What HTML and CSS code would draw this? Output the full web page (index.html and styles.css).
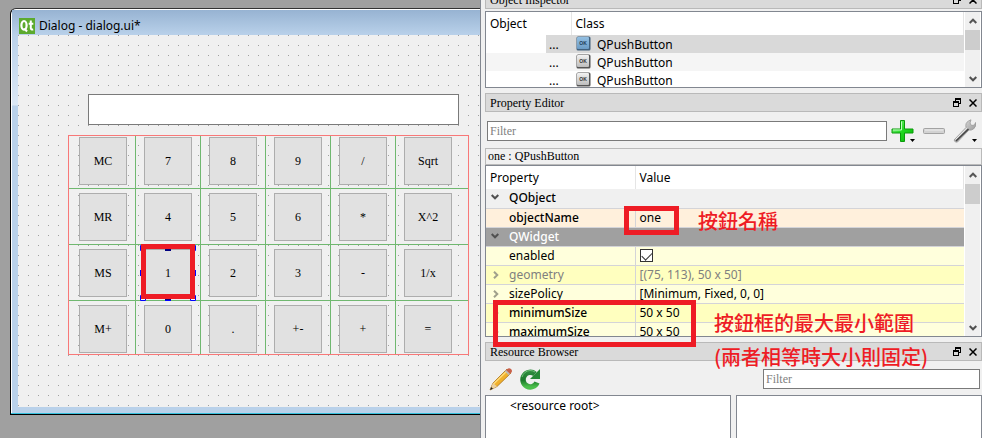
FILE: index.html
```html
<!DOCTYPE html>
<html lang="zh-Hant">
<head>
<meta charset="utf-8">
<title>Qt Designer</title>
<link rel="stylesheet" href="styles.css">
</head>
<body>
<svg class="defs" width="0" height="0" aria-hidden="true">
  <defs>
    <linearGradient id="gGrey" x1="0" y1="0" x2="0" y2="1"><stop offset="0" stop-color="#f2f2f2"/><stop offset="1" stop-color="#bdbdbd"/></linearGradient>
    <linearGradient id="gBlue" x1="0" y1="0" x2="0" y2="1"><stop offset="0" stop-color="#93bfe2"/><stop offset="1" stop-color="#6b9cc6"/></linearGradient>
    <linearGradient id="gPlus" x1="0" y1="0" x2="1" y2="1"><stop offset="0" stop-color="#8cf58c"/><stop offset=".5" stop-color="#22d822"/><stop offset="1" stop-color="#04b404"/></linearGradient>
    <linearGradient id="gReload" x1="0" y1="0" x2="0" y2="1"><stop offset="0" stop-color="#2c8a3c"/><stop offset=".55" stop-color="#1b7a2b"/><stop offset="1" stop-color="#4cc04c"/></linearGradient>
    <linearGradient id="gSteel" x1="0" y1="0" x2="1" y2="1"><stop offset="0" stop-color="#fafafa"/><stop offset="1" stop-color="#777"/></linearGradient>
  </defs>
  <symbol id="float" viewBox="0 0 8 9"><path d="M2 0h6v6H6V5h1V2H3v1H2zM0 3h6v6H0zM1 5v3h4V5z" fill="#000" fill-rule="evenodd"/></symbol>
  <symbol id="close" viewBox="0 0 8 8"><path d="M.5.5l7 7M7.500.5l-7 7" stroke="#000" stroke-width="1.500"/></symbol>
  <symbol id="up" viewBox="0 0 8 6"><path d="M.7 5L4 1.700 7.300 5" fill="none" stroke="#555" stroke-width="2"/></symbol>
  <symbol id="down" viewBox="0 0 8 6"><path d="M.7 1L4 4.300 7.300 1" fill="none" stroke="#505050" stroke-width="2"/></symbol>
  <symbol id="right" viewBox="0 0 6 8"><path d="M1 .7L4.300 4 1 7.300" fill="none" stroke="#a0a08c" stroke-width="2"/></symbol>
</svg>

<main class="app">
  <section class="workspace">
    <div class="window">
      <header class="titlebar">
        <svg class="qt" viewBox="0 0 16 16" role="img" aria-label="Qt">
          <path d="M0 0h16v16H0z" fill="#5caa2e"/>
          <ellipse cx="5" cy="7.300" rx="2.600" ry="4.300" fill="none" stroke="#fff" stroke-width="2.200"/>
          <path d="M5.500 10.500l2.500 3M11.800 2.500v7.500q0 2 2.400 1.500M9.700 5.800h4.600" fill="none" stroke="#fff" stroke-width="2"/>
        </svg>
        <h1>Dialog - dialog.ui*</h1>
      </header>
      <div class="canvas">
        <input class="display" type="text" aria-label="display">
        <div class="keys">
          <div><button>MC</button></div><div><button>7</button></div><div><button>8</button></div><div><button>9</button></div><div><button>/</button></div><div><button>Sqrt</button></div>
          <div><button>MR</button></div><div><button>4</button></div><div><button>5</button></div><div><button>6</button></div><div><button>*</button></div><div><button>X^2</button></div>
          <div><button>MS</button></div>
          <div class="picked"><button>1</button>
            <svg class="handles" viewBox="0 0 56 56" aria-hidden="true">
              <path d="M.5.5h5v5h-5zM50.500.5h5v5h-5zM.5 50.500h5v5h-5zM50.500 50.500h5v5h-5z" fill="#fff" stroke="#00f"/>
              <path d="M25 0h6v6h-6zM25 50h6v6h-6zM0 25h6v6H0zM50 25h6v6h-6z" fill="#00f"/>
              <path d="M25 4h6v2h-6zM25 50h6v5h-6z" fill="#000080"/>
            </svg>
            <span class="mark mark-key"></span>
          </div>
          <div><button>2</button></div><div><button>3</button></div><div><button>-</button></div><div><button>1/x</button></div>
          <div><button>M+</button></div><div><button>0</button></div><div><button>.</button></div><div><button>+-</button></div><div><button>+</button></div><div><button>=</button></div>
        </div>
      </div>
    </div>
  </section>

  <aside class="docks">
    <section class="dock inspector">
      <header class="dock-title"><h2>Object Inspector</h2>
        <button aria-label="Float"><svg class="i-float"><use href="#float"/></svg></button><button aria-label="Close"><svg class="i-close"><use href="#close"/></svg></button></header>
      <div class="view objects">
        <div class="rows">
          <table>
            <thead><tr><th>Object</th><th>Class</th></tr></thead>
            <tbody>
              <tr class="current"><td>...</td><td><svg class="ok" viewBox="0 0 15 15"><rect x=".5" y=".5" width="14" height="14" rx="1.500" fill="#41607c"/><rect x="1" y="1" width="12" height="12" rx="1" fill="url(#gBlue)"/><text x="7" y="9" fill="#1d3a56">OK</text></svg>QPushButton</td></tr>
              <tr><td>...</td><td><svg class="ok" viewBox="0 0 15 15"><rect x=".5" y=".5" width="14" height="14" rx="1.500" fill="#555"/><rect x="1" y="1" width="12" height="12" rx="1" fill="url(#gGrey)"/><text x="7" y="9" fill="#333">OK</text></svg>QPushButton</td></tr>
              <tr><td>...</td><td><svg class="ok" viewBox="0 0 15 15"><rect x=".5" y=".5" width="14" height="14" rx="1.500" fill="#555"/><rect x="1" y="1" width="12" height="12" rx="1" fill="url(#gGrey)"/><text x="7" y="9" fill="#333">OK</text></svg>QPushButton</td></tr>
            </tbody>
          </table>
        </div>
        <div class="scroll"><svg><use href="#up"/></svg><span class="thumb"></span><svg><use href="#down"/></svg></div>
      </div>
    </section>

    <section class="dock editor">
      <header class="dock-title"><h2>Property Editor</h2>
        <button aria-label="Float"><svg class="i-float"><use href="#float"/></svg></button><button aria-label="Close"><svg class="i-close"><use href="#close"/></svg></button></header>
      <div class="tools">
        <input type="text" placeholder="Filter" aria-label="Filter properties">
        <button aria-label="Add"><svg viewBox="0 0 24 24"><path d="M9.500 1.500h4v8.500h8.500v4h-8.500v8.500h-4v-8.500H1v-4h8.500z" fill="url(#gPlus)" stroke="#0a9a0a"/><path d="M10.500 11v-8.500M2 11h8.500" stroke="#c4ffc4" fill="none"/><path d="M19 20h5l-2.500 3z"/></svg></button>
        <button aria-label="Remove"><svg viewBox="0 0 24 24"><rect x="1.500" y="9.500" width="21" height="5" rx="1" fill="#d2d2d2" stroke="#a2a2a2"/><path d="M3 11h18" stroke="#eee"/></svg></button>
        <button aria-label="Configure"><svg viewBox="0 0 24 24"><path d="M1 21L13 8.500Q12 4 15.500 2L18 .8 17 4l1.500 2.500 3-.5 1-2.500q1 4-2 6.500-2 1.500-4.500 1L4.500 23Q2 24 1 21z" fill="url(#gSteel)" stroke="#999" stroke-width=".8"/><path d="M3 22L15.500 10" stroke="#444" stroke-width="1.600"/><path d="M2.500 20.500L14 8.800" stroke="#eee"/><path d="M19 20h5l-2.500 3z"/></svg></button>
      </div>
      <p class="subject">one : QPushButton</p>
      <div class="view properties">
        <div class="rows">
          <table>
            <thead><tr><th>Property</th><th>Value</th></tr></thead>
            <tbody>
              <tr class="group"><td colspan="2"><svg class="fold"><use href="#down"/></svg>QObject</td></tr>
              <tr class="peach strong"><td>objectName</td><td>one</td></tr>
              <tr class="group dark"><td colspan="2"><svg class="fold"><use href="#down"/></svg>QWidget</td></tr>
              <tr class="light"><td>enabled</td><td><input type="checkbox" checked aria-label="enabled"></td></tr>
              <tr class="deep dim"><td><svg class="fold side"><use href="#right"/></svg>geometry</td><td>[(75, 113), 50 x 50]</td></tr>
              <tr class="light"><td><svg class="fold side"><use href="#right"/></svg>sizePolicy</td><td>[Minimum, Fixed, 0, 0]</td></tr>
              <tr class="deep strong"><td><svg class="fold side"><use href="#right"/></svg>minimumSize</td><td>50 x 50</td></tr>
              <tr class="light strong"><td><svg class="fold side"><use href="#right"/></svg>maximumSize</td><td>50 x 50</td></tr>
            </tbody>
          </table>
        </div>
        <div class="scroll"><svg><use href="#up"/></svg><span class="thumb"></span><svg><use href="#down"/></svg></div>
        <span class="mark mark-name"></span>
        <span class="mark mark-size"></span>
        <p class="note note-name">按鈕名稱</p>
        <p class="note note-size">按鈕框的最大最小範圍<br>(兩者相等時大小則固定)</p>
      </div>
    </section>

    <section class="dock resources">
      <header class="dock-title"><h2>Resource Browser</h2>
        <button aria-label="Float"><svg class="i-float"><use href="#float"/></svg></button><button aria-label="Close"><svg class="i-close"><use href="#close"/></svg></button></header>
      <div class="res-tools">
        <button aria-label="Edit resources"><svg viewBox="0 0 24 24"><path d="M1 23l3-7L18 2l4 4L8 19.500z" fill="#f0b02c" stroke="#a8701c" stroke-width=".8"/><path d="M4.500 17L18.500 3.500" stroke="#ffdc7a" stroke-width="1.500"/><path d="M1 23l3-7 4 3.500z" fill="#ead0a0"/><path d="M1 23l1.200-3 1.800 1.700z" fill="#222"/><path d="M16.500 3.500l4 4" stroke="#bbb" stroke-width="2"/><path d="M18 2.200q2-2 4-.2t0 4l-1 .8-4-3.800z" fill="#c8604a"/></svg></button>
        <button aria-label="Reload"><svg viewBox="0 0 24 24"><path d="M17 7A7.300 7.300 0 1 0 19 15.500" fill="none" stroke="url(#gReload)" stroke-width="5.500"/><path d="M22 2v10H12z" fill="#268a36"/><path d="M4 10Q6 4 12 3.500q3 0 5 1.500" fill="none" stroke="#6fbf78"/></svg></button>
        <input type="text" placeholder="Filter" aria-label="Filter resources">
      </div>
      <div class="res-panes">
        <div class="pane">&lt;resource root&gt;</div>
        <div class="pane"></div>
      </div>
    </section>
  </aside>
</main>
</body>
</html>
```
FILE: styles.css
```css
* { box-sizing: border-box; }

body {
  margin: 0;
  background: #a0a0a0;
  color: #000;
  font: 12px/18px "Liberation Serif", "Noto Sans CJK TC", serif;
}

h1, h2, p { margin: 0; font-weight: normal; }
button, input { font: inherit; color: inherit; }
svg { display: block; flex: none; }
.defs { position: absolute; }

.app { display: flex; height: 100vh; overflow: hidden; }

/* form being designed */
.workspace { flex: none; width: 480px; padding: 8px 0 0 10px; }

.window {
  border: solid #000;
  border-width: 1px 0 1px 1px;
  border-top-color: #333;
  border-radius: 6px 0 0 0;
  padding: 1px 0 7px 7px;
  background:
    linear-gradient(#35c0dc, #35c0dc) 0 100% / 100% 1px no-repeat,
    linear-gradient(#fff, #fff) 0 0 / 100% 1px no-repeat,
    linear-gradient(#fff, #fff) 0 0 / 1px 100% no-repeat,
    linear-gradient(#97b3d2, #b9d1ea 25px, #dce8f5 96px, #b9d1ea 97px);
  background-origin: padding-box;
  background-clip: padding-box;
}

.titlebar {
  display: flex;
  align-items: center;
  gap: 4px;
  height: 25px;
  margin-left: -6px;
  padding: 6px 0 0 7px;
  background: linear-gradient(#97b3d2, #b9d1ea);
}
.titlebar h1 { font: 12px/18px "Noto Sans", sans-serif; }
.qt { width: 16px; height: 16px; }

/* 10px placement grid */
.canvas {
  height: 372px;
  padding: 59px 0 0 50px;
  background:
    conic-gradient(from 270deg at 1px 1px, #a0a0a0 90deg, #f0f0f0 0) 0 0 / 10px 10px;
}

.display {
  display: block;
  width: 371px;
  height: 31px;
  margin: 0 0 10px 20px;
  border: 1px solid #7a7a7a;
  background: #fff;
}

.keys {
  display: grid;
  grid-template-columns: 67px repeat(4, 65px) 72px;
  grid-template-rows: 53px 56px 56px 53px;
  width: 401px;
  border: 1px solid #f87878;
}
.keys > div {
  display: flex;
  position: relative;
  padding: 4px 0 0 8px;
  border: solid #70b870;
  border-width: 0 1px 1px 0;
}
.keys > div:nth-child(6n + 1) { padding-left: 10px; }
.keys > div:nth-child(6n) { border-right: 0; }
.keys > div:nth-child(-n + 6) { padding-top: 1px; }
.keys > div:nth-child(n + 19) { border-bottom: 0; }
.keys button {
  width: 48px;
  height: 48px;
  padding: 0;
  border: 1px solid #adadad;
  background: #e1e1e1;
}

.keys .picked { z-index: 1; }
.handles { position: absolute; left: 4px; top: 0; width: 56px; height: 56px; }

/* red call-outs */
.mark { position: absolute; border: 5px solid #ee1c25; }
.mark-key { left: 5px; top: -1px; width: 54px; height: 55px; }
.mark-name { left: 138px; top: 40px; width: 55px; height: 29px; }
.mark-size { left: 7px; top: 134px; width: 203px; height: 47px; }
.note {
  position: absolute;
  color: #ee1c25;
  font: 500 20px/34px "Noto Sans CJK TC", sans-serif;
  white-space: nowrap;
}
.note-name { left: 212px; top: 38px; }
.note-size { left: 228px; top: 140px; }

/* docks */
.docks {
  flex: 1;
  display: flex;
  flex-direction: column;
  min-width: 0;
  padding-left: 4px;
  border-left: 1px solid #828790;
  background: #f0f0f0;
}
.inspector { margin-top: -10px; }

.dock-title {
  display: flex;
  align-items: center;
  gap: 8px;
  height: 19px;
  padding: 0 4px;
  border: 1px solid #b9b9b9;
  background: #dadada;
}
.dock-title h2 { flex: 1; font-size: 12px; line-height: 15px; padding-top: 2px; }
.dock-title button, .tools button, .res-tools button {
  flex: none;
  padding: 0;
  border: 0;
  background: none;
}
.i-float { width: 8px; height: 9px; }
.i-close { width: 8px; height: 8px; }

.view {
  display: flex;
  position: relative;
  border: 1px solid #828790;
  background: #fff;
  font: 12px/18px "Noto Sans", sans-serif;
}
.objects { height: 77px; margin: 2px 0 5px; }
.properties { height: 172px; margin-bottom: 5px; }
.rows { flex: 1; overflow: hidden; }

table { width: 100%; table-layout: fixed; border-collapse: collapse; }
th { height: 23px; padding: 0 4px; font-weight: normal; text-align: left; border-right: 1px solid #e5e5e5; }
td { padding: 0; white-space: nowrap; }

.objects th:first-child { width: 85px; }
.objects td { height: 18px; padding-top: 2px; line-height: 16px; }
.objects td:first-child { padding-left: 63px; }
.objects td svg { display: inline-block; vertical-align: top; margin: -1px 6px 0 5px; }
.objects tbody tr:nth-child(2) { background: #f5f5f5; }
.objects .current { background: linear-gradient(90deg, #fff 60px, #d9d9d9 60px); }
.ok { width: 15px; height: 15px; }
.ok text { font: bold 5px "Liberation Sans", sans-serif; text-anchor: middle; }

.properties th:first-child { width: 149px; }
.properties td { height: 19px; padding-left: 4px; border-bottom: 1px solid #d4d4d8; }
.properties td:first-child { padding-left: 23px; border-right: 1px solid #d4d4d8; }
.properties td[colspan] { border-right: 0; }
.fold { float: left; width: 8px; height: 6px; margin: 5px 0 0 -18px; }
.fold.side { width: 6px; height: 8px; margin-left: -16px; }
.group { background: #f0f0f0; font-weight: 500; }
.dark { background: #a0a0a0; color: #fff; }
.peach { background: #fff0dc; }
.light { background: #ffffdc; }
.deep { background: #ffffbf; }
.dim { color: #808080; }
.strong td:first-child { font-weight: 500; }
input[type="checkbox"] {
  appearance: none;
  display: block;
  width: 13px;
  height: 13px;
  margin: 0;
  border: 1px solid #333;
  background: #fff;
}
input[type="checkbox"]:checked::after {
  content: "";
  display: block;
  width: 9px;
  height: 5px;
  margin: 2px 0 0 1px;
  border: solid #333;
  border-width: 0 0 1px 1px;
  transform: rotate(-45deg);
}

.scroll {
  display: flex;
  flex-direction: column;
  align-items: center;
  width: 17px;
  padding: 6px 0 5px;
  border: solid #fff;
  border-width: 0 1px;
  background: #f0f0f0;
}
.scroll svg { width: 8px; height: 6px; }
.scroll svg:last-child { margin-top: auto; }
.thumb { width: 15px; height: 20px; margin-top: 6px; background: #cdcdcd; }

.tools {
  display: flex;
  align-items: center;
  gap: 7px;
  padding: 7px 5px 3px 2px;
}
.tools input, .res-tools input {
  height: 20px;
  min-width: 0;
  padding: 0 2px;
  border: 1px solid #7a7a7a;
  background: #fff;
}
.tools input { flex: 1; margin-right: -3px; }
.tools svg, .res-tools svg { width: 24px; height: 24px; }
::placeholder { color: #7f7f7f; opacity: 1; }

.subject {
  height: 17px;
  margin-top: 2px;
  padding-left: 2px;
  border: 1px solid #bababa;
  line-height: 15px;
}

.resources { flex: 1; display: flex; flex-direction: column; }
.res-tools { display: flex; align-items: center; gap: 5px; padding: 6px 2px 4px 4px; }
.res-tools input { width: 217px; margin-left: auto; }
.res-panes { flex: 1; display: grid; grid-template-columns: 1fr 1fr; gap: 5px; }
.pane {
  padding-left: 24px;
  border: 1px solid #828790;
  border-bottom: 0;
  background: #fff;
  font: 12px/19px "Noto Sans", sans-serif;
}
```
